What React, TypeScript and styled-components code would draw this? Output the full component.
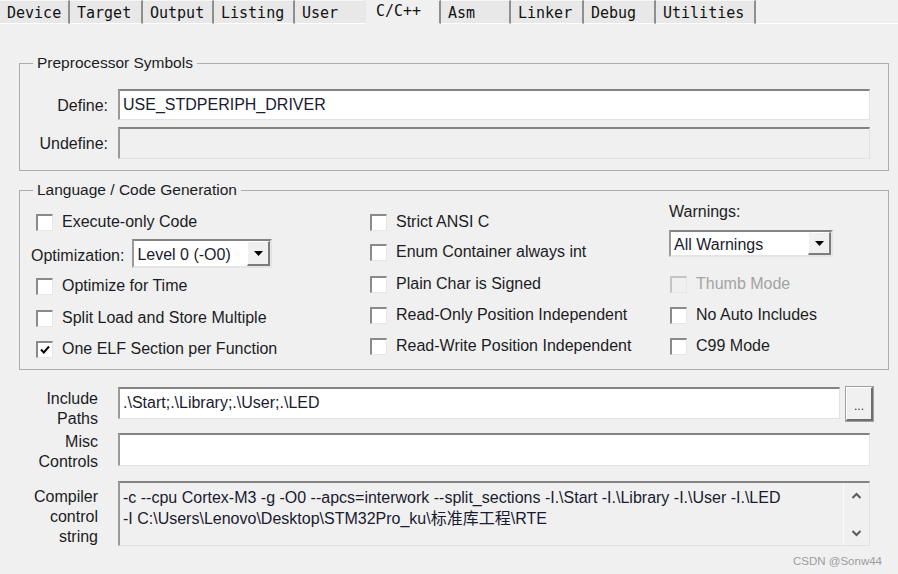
import React from "react";
import styled, { createGlobalStyle } from "styled-components";

const GlobalStyle = createGlobalStyle`
  html, body {
    margin: 0;
    padding: 0;
    background: #f0f0f0;
  }
  body {
    font-family: "Liberation Sans", Arial, "Noto Sans CJK SC", sans-serif;
    color: #1c1c24;
  }
`;

const Page = styled.div`
  width: 898px;
  height: 574px;
  overflow: hidden;
  background: #f0f0f0;
  display: flex;
  flex-direction: column;
`;

const TabBar = styled.div`
  display: flex;
  height: 24px;
`;

const Tab = styled.div<{ $w: number; $active?: boolean; $noEdge?: boolean }>`
  width: ${(p) => p.$w}px;
  height: 24px;
  box-sizing: border-box;
  padding: ${(p) => (p.$active ? "2px 0 0 10px" : "4px 0 0 7px")};
  font-family: "DejaVu Sans Mono", "Liberation Mono", monospace;
  font-size: 15px;
  line-height: 17px;
  color: #111;
  white-space: pre;
  background: ${(p) => (p.$active ? "#f0f0f0" : "#e8e8e8")};
  border-top: 1px solid ${(p) => (p.$active ? "#f0f0f0" : "#f6f6f6")};
  border-bottom: 1px solid ${(p) => (p.$active ? "#f0f0f0" : "#ffffff")};
  border-right: 2px solid ${(p) => (p.$noEdge ? "#e8e8e8" : "#8e8e8e")};
`;

const TabFill = styled.div`
  flex: 1;
  border-bottom: 1px solid #ffffff;
`;

const Content = styled.div`
  padding: 0 9px 0 19px;
  display: flex;
  flex-direction: column;
`;

const Group = styled.fieldset<{ $mt: number }>`
  margin: ${(p) => p.$mt}px 0 0 0;
  padding: 0;
  min-width: 0;
  border: 1px solid #acacac;
`;

const Legend = styled.legend`
  margin-left: 13px;
  padding: 0 4px;
  font-size: 15.5px;
  line-height: 20px;
  color: #1c1c24;
`;

const SymbolGrid = styled.div`
  display: grid;
  grid-template-columns: 88px 1fr;
  column-gap: 10px;
  row-gap: 7px;
  align-items: center;
  padding: 16px 18px 11px 0;
`;

const FieldLabel = styled.div`
  font-size: 16px;
  text-align: right;
  line-height: 20px;
  padding-top: 2px;
`;

const Field = styled.div<{ $h: number; $disabled?: boolean; $mt?: number }>`
  height: ${(p) => p.$h}px;
  margin-top: ${(p) => p.$mt ?? 0}px;
  box-sizing: border-box;
  background: ${(p) => (p.$disabled ? "#f0f0f0" : "#ffffff")};
  border-top: 2px solid #838383;
  border-left: 2px solid #9a9a9a;
  border-right: 1px solid #e2e2e2;
  border-bottom: 1px solid #e2e2e2;
  padding: 3px 0 0 3px;
  font-size: 16px;
  line-height: 22px;
  color: #1a1a30;
  white-space: pre;
  overflow: hidden;
`;

const OptionsGrid = styled.div`
  display: grid;
  grid-template-columns: 350px 299px 1fr;
  height: 169px;
`;

const Column = styled.div<{ $pt: number }>`
  display: flex;
  flex-direction: column;
  padding-top: ${(p) => p.$pt}px;
`;

const Row = styled.div<{ $h: number; $mt?: number; $indent?: number }>`
  height: ${(p) => p.$h}px;
  margin-top: ${(p) => p.$mt ?? 0}px;
  padding-left: ${(p) => p.$indent ?? 0}px;
  flex-shrink: 0;
  display: flex;
  align-items: center;
  gap: 9px;
  font-size: 16px;
  white-space: nowrap;
`;

const CheckLabel = styled.span<{ $disabled?: boolean }>`
  color: ${(p) => (p.$disabled ? "#a3a3a3" : "#1c1c24")};
`;

const OptLabel = styled.span`
  padding-top: 5px;
`;

const Box = styled.span<{ $disabled?: boolean }>`
  width: 17px;
  height: 17px;
  box-sizing: border-box;
  display: inline-flex;
  align-items: center;
  justify-content: center;
  background: ${(p) => (p.$disabled ? "#f0f0f0" : "#ffffff")};
  border-top: 2px solid ${(p) => (p.$disabled ? "#c4c4c4" : "#8a8a8a")};
  border-left: 2px solid ${(p) => (p.$disabled ? "#c4c4c4" : "#8a8a8a")};
  border-right: 1px solid #e6e6e6;
  border-bottom: 1px solid #e6e6e6;
`;

const Combo = styled.div<{ $w: number; $h: number }>`
  width: ${(p) => p.$w}px;
  height: ${(p) => p.$h}px;
  box-sizing: border-box;
  display: flex;
  align-items: center;
  background: #ffffff;
  border-top: 2px solid #848484;
  border-left: 2px solid #9a9a9a;
  border-right: 2px solid #e4e4e4;
  border-bottom: 2px solid #e4e4e4;
  font-size: 16px;
  color: #1a1a30;
`;

const ComboText = styled.span`
  flex: 1;
  padding: 3px 0 0 3px;
`;

const DropButton = styled.span`
  width: 23px;
  align-self: stretch;
  box-sizing: border-box;
  display: flex;
  align-items: center;
  justify-content: center;
  background: #f0f0f0;
  border-top: 1px solid #ffffff;
  border-left: 1px solid #ffffff;
  border-right: 2px solid #7c7c7c;
  border-bottom: 2px solid #7c7c7c;
`;

const WarnLabel = styled.div`
  height: 20px;
  font-size: 16px;
  line-height: 20px;
`;

const BottomRow = styled.div<{ $mt: number }>`
  display: grid;
  grid-template-columns: 79px 1fr;
  column-gap: 20px;
  align-items: start;
  margin: ${(p) => p.$mt}px 19px 0 0;
`;

const SideLabel = styled.div<{ $mt?: number }>`
  margin-top: ${(p) => p.$mt ?? 0}px;
  font-size: 16px;
  line-height: 20px;
  text-align: right;
`;

const InputLine = styled.div`
  display: flex;
  align-items: flex-start;
  gap: 6px;
  margin-right: -3px;
`;

const BrowseButton = styled.div`
  width: 27px;
  height: 34px;
  box-sizing: border-box;
  flex-shrink: 0;
  display: flex;
  align-items: center;
  justify-content: center;
  padding-top: 4px;
  font-size: 12px;
  color: #333;
  background: #f0f0f0;
  border-top: 1px solid #ffffff;
  border-left: 1px solid #ffffff;
  border-right: 2px solid #6e6e6e;
  border-bottom: 2px solid #6e6e6e;
  outline: 1px solid #a0a0a0;
`;

const Memo = styled.div`
  height: 65px;
  box-sizing: border-box;
  display: flex;
  background: #f0f0f0;
  border-top: 2px solid #838383;
  border-left: 2px solid #9a9a9a;
  border-right: 1px solid #e2e2e2;
  border-bottom: 1px solid #e2e2e2;
`;

const MemoText = styled.div`
  flex: 1;
  padding: 4px 0 0 3px;
  font-size: 16px;
  line-height: 21px;
  color: #1a1a30;
  white-space: pre;
  overflow: hidden;
`;

const ScrollBar = styled.div`
  width: 26px;
  box-sizing: border-box;
  border-left: 1px solid #fbfbfb;
  display: flex;
  flex-direction: column;
  align-items: center;
  justify-content: space-between;
  padding: 9px 0 8px;
`;

const Watermark = styled.div`
  margin-top: 8px;
  padding-right: 16px;
  text-align: right;
  font-size: 11.5px;
  color: #9c9c9c;
`;

const tabs = [
  { label: "Device", w: 70 },
  { label: "Target", w: 73 },
  { label: "Output", w: 71 },
  { label: "Listing", w: 81 },
  { label: "User", w: 71 },
  { label: "C/C++", w: 75, active: true },
  { label: "Asm", w: 70 },
  { label: "Linker", w: 73 },
  { label: "Debug", w: 72 },
  { label: "Utilities", w: 100 },
];

const Check = ({ checked, disabled }: { checked?: boolean; disabled?: boolean }) => (
  <Box $disabled={disabled}>
    {checked && (
      <svg width="12" height="12" viewBox="0 0 12 12">
        <path d="M2 5.5 L4.8 8.5 L10 2.5" fill="none" stroke="#000" strokeWidth="2" />
      </svg>
    )}
  </Box>
);

const Triangle = () => (
  <svg width="9" height="5" viewBox="0 0 9 5">
    <path d="M0 0 H9 L4.5 5 Z" fill="#000" />
  </svg>
);

const Chevron = ({ up }: { up?: boolean }) => (
  <svg width="11" height="7" viewBox="0 0 11 7">
    <path
      d={up ? "M1.5 6 L5.5 2 L9.5 6" : "M1.5 1 L5.5 5 L9.5 1"}
      fill="none"
      stroke="#5a5a5a"
      strokeWidth="2"
    />
  </svg>
);

type CheckRowProps = {
  label: string;
  mt?: number;
  indent?: number;
  checked?: boolean;
  disabled?: boolean;
};

const CheckRow = ({ label, mt, indent, checked, disabled }: CheckRowProps) => (
  <Row $h={28} $mt={mt} $indent={indent}>
    <Check checked={checked} disabled={disabled} />
    <CheckLabel $disabled={disabled}>{label}</CheckLabel>
  </Row>
);

export default function App() {
  return (
    <Page>
      <GlobalStyle />
      <TabBar>
        {tabs.map((t, i) => (
          <Tab
            key={t.label}
            $w={t.w}
            $active={t.active}
            $noEdge={tabs[i + 1]?.active}
          >
            {t.label}
          </Tab>
        ))}
        <TabFill />
      </TabBar>

      <Content>
        <Group $mt={29}>
          <Legend>Preprocessor Symbols</Legend>
          <SymbolGrid>
            <FieldLabel>Define:</FieldLabel>
            <Field $h={31}>USE_STDPERIPH_DRIVER</Field>
            <FieldLabel>Undefine:</FieldLabel>
            <Field $h={32} $disabled />
          </SymbolGrid>
        </Group>

        <Group $mt={9}>
          <Legend>Language / Code Generation</Legend>
          <OptionsGrid>
            <Column $pt={8}>
              <CheckRow label="Execute-only Code" indent={16} />
              <Row $h={29} $mt={3} $indent={11} style={{ gap: 8 }}>
                <OptLabel>Optimization:</OptLabel>
                <Combo $w={140} $h={29}>
                  <ComboText>Level 0 (-O0)</ComboText>
                  <DropButton>
                    <Triangle />
                  </DropButton>
                </Combo>
              </Row>
              <CheckRow label="Optimize for Time" mt={4} indent={16} />
              <CheckRow label="Split Load and Store Multiple" mt={4} indent={16} />
              <CheckRow label="One ELF Section per Function" mt={3} indent={16} checked />
            </Column>

            <Column $pt={8}>
              <CheckRow label="Strict ANSI C" />
              <CheckRow label="Enum Container always int" mt={2} />
              <CheckRow label="Plain Char is Signed" mt={4} />
              <CheckRow label="Read-Only Position Independent" mt={3} />
              <CheckRow label="Read-Write Position Independent" mt={3} />
            </Column>

            <Column $pt={2}>
              <WarnLabel>Warnings:</WarnLabel>
              <Row $h={27} $mt={8}>
                <Combo $w={164} $h={27}>
                  <ComboText>All Warnings</ComboText>
                  <DropButton>
                    <Triangle />
                  </DropButton>
                </Combo>
              </Row>
              <CheckRow label="Thumb Mode" mt={13} indent={1} disabled />
              <CheckRow label="No Auto Includes" mt={3} indent={1} />
              <CheckRow label="C99 Mode" mt={3} indent={1} />
            </Column>
          </OptionsGrid>
        </Group>

        <BottomRow $mt={17}>
          <SideLabel $mt={2}>
            Include
            <br />
            Paths
          </SideLabel>
          <InputLine>
            <Field $h={32} style={{ flex: 1 }}>
              .\Start;.\Library;.\User;.\LED
            </Field>
            <BrowseButton>...</BrowseButton>
          </InputLine>
        </BottomRow>

        <BottomRow $mt={1}>
          <SideLabel $mt={2}>
            Misc
            <br />
            Controls
          </SideLabel>
          <Field $h={33} $mt={3} />
        </BottomRow>

        <BottomRow $mt={9}>
          <SideLabel $mt={6}>
            Compiler
            <br />
            control
            <br />
            string
          </SideLabel>
          <Memo>
            <MemoText>
              {"-c --cpu Cortex-M3 -g -O0 --apcs=interwork --split_sections -I.\\Start -I.\\Library -I.\\User -I.\\LED\n-I C:\\Users\\Lenovo\\Desktop\\STM32Pro_ku\\标准库工程\\RTE"}
            </MemoText>
            <ScrollBar>
              <Chevron up />
              <Chevron />
            </ScrollBar>
          </Memo>
        </BottomRow>
      </Content>
      <Watermark>CSDN @Sonw44</Watermark>
    </Page>
  );
}
